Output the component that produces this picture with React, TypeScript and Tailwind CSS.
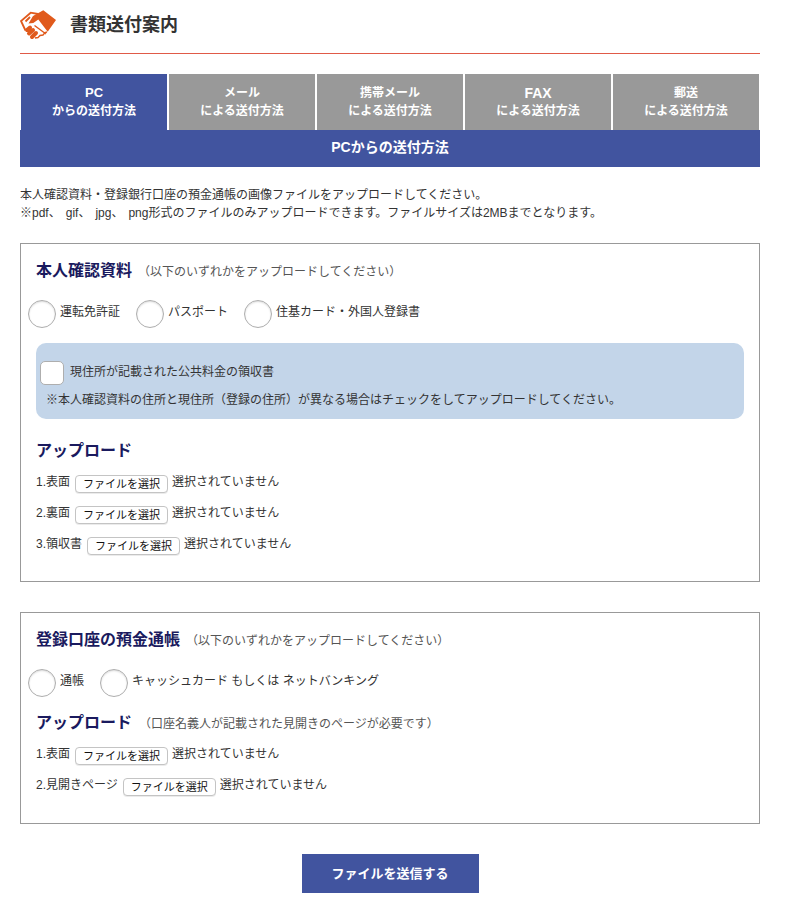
import React from "react";

const tabs: [string, string, string][] = [
  ["PC", "からの送付方法", "text-[13px]"],
  ["メール", "による送付方法", ""],
  ["携帯メール", "による送付方法", ""],
  ["FAX", "による送付方法", "text-[14px]"],
  ["郵送", "による送付方法", ""],
];

function Radio({ label }: { label: string }) {
  return (
    <div className="flex items-start">
      <span className="h-7 w-7 rounded-full border border-[#aeaeae] bg-white shadow-[inset_0_1px_2px_rgba(0,0,0,0.15)]" />
      <span className="ml-1 mt-[3px] text-[12px] leading-[18px] text-[#333]">{label}</span>
    </div>
  );
}

function FileRow({ label }: { label: string }) {
  return (
    <div className="flex h-[31px] items-start text-[12px] leading-[18px] text-[#333]">
      <span>{label}</span>
      <span className="ml-[5px] mt-[2px] flex h-[18px] w-[93px] items-center justify-center rounded-[4px] border border-[#c4c4c4] bg-white text-[11px] leading-none text-[#111] shadow-[0_1px_0_rgba(0,0,0,0.08)]">
        ファイルを選択
      </span>
      <span className="ml-1">選択されていません</span>
    </div>
  );
}

function Comma() {
  return <span className="tracking-[5px]">、</span>;
}

export default function App() {
  return (
    <div
      className="min-h-[905px] w-[791px] bg-white px-5"
      style={{ fontFamily: '"Liberation Sans", "Noto Sans CJK JP", sans-serif' }}
    >
      <div className="w-[740px]">
        <header className="flex h-[54px] items-start border-b border-[#e05a48] pt-[8px]">
          <svg viewBox="0 0 36 30" className="mt-[2px] h-[30px] w-[36px]">
            <path d="M13 6 L23.3 0.3 L36 10 L27.7 21.7 L18.3 9.5 L13.3 13 L8.5 13.5 Z" fill="#e05a1c" />
            <path d="M5.5 20.5 L1 11 L10.7 2.7 L18 4 M5.5 11.5 L10 7" fill="none" stroke="#e05a1c" strokeWidth="1.8" />
            <path d="M15 28 L18 27.5 L20 25.5 L23 25 L25 22.5 L27 22 M14.5 15.5 L26 24" fill="none" stroke="#e05a1c" strokeWidth="1.4" />
            <path d="M7 20 L10 17.5 M9 23.5 L13 20 M12 27 L16 23" fill="none" stroke="#e05a1c" strokeWidth="4" strokeLinecap="round" />
          </svg>
          <h1 className="ml-[14px] mt-[6px] text-[18px] font-bold leading-[22px] text-[#333]">書類送付案内</h1>
        </header>

        <nav className="mt-5 flex gap-[2px] px-px">
          {tabs.map((t, i) => (
            <div
              key={t[1] + i}
              className={`flex h-14 w-[146px] shrink-0 flex-col items-center justify-center text-center text-[12px] font-bold leading-[18px] text-white ${i === 0 ? "bg-[#41549f]" : "bg-[#999999]"}`}
            >
              <span className={t[2]}>{t[0]}</span>
              <span>{t[1]}</span>
            </div>
          ))}
        </nav>
        <div className="flex h-[37px] items-center justify-center bg-[#41549f] pb-[2px] text-[14px] font-bold text-white">
          PCからの送付方法
        </div>

        <p className="mt-[19px] text-[12px] leading-[18px] text-[#333]">
          本人確認資料・登録銀行口座の預金通帳の画像ファイルをアップロードしてください。
          <br />
          ※pdf<Comma />gif<Comma />jpg<Comma />png形式のファイルのみアップロードできます。ファイルサイズは2MBまでとなります。
        </p>

        <section className="mt-[21px] h-[339px] border border-[#999] px-[15px] pt-[17px]">
          <div className="flex items-baseline">
            <h2 className="text-[16px] font-bold leading-[20px] text-[#1a1a5e]">本人確認資料</h2>
            <span className="ml-[6px] text-[12px] text-[#555]">（以下のいずれかをアップロードしてください）</span>
          </div>
          <div className="-ml-[8px] mt-[19px] flex gap-4">
            <Radio label="運転免許証" />
            <Radio label="パスポート" />
            <Radio label="住基カード・外国人登録書" />
          </div>
          <div className="mt-[15px] h-[76px] rounded-[10px] bg-[#c3d5e9] pl-1 pt-[18px]">
            <div className="flex items-start">
              <span className="h-6 w-6 rounded-[5px] border border-[#aeaeae] bg-white" />
              <span className="ml-[6px] mt-[2px] text-[12px] leading-[18px] text-[#333]">現住所が記載された公共料金の領収書</span>
            </div>
            <p className="ml-[6px] mt-[6px] text-[12px] leading-[18px] text-[#333]">
              ※本人確認資料の住所と現住所（登録の住所）が異なる場合はチェックをしてアップロードしてください。
            </p>
          </div>
          <h3 className="mt-[21px] text-[16px] font-bold leading-[22px] text-[#1a1a5e]">アップロード</h3>
          <div className="mt-[11px]">
            <FileRow label="1.表面" />
            <FileRow label="2.裏面" />
            <FileRow label="3.領収書" />
          </div>
        </section>

        <section className="mt-[30px] h-[212px] border border-[#999] px-[15px] pt-[17px]">
          <div className="flex items-baseline">
            <h2 className="text-[16px] font-bold leading-[20px] text-[#1a1a5e]">登録口座の預金通帳</h2>
            <span className="ml-[6px] text-[12px] text-[#555]">（以下のいずれかをアップロードしてください）</span>
          </div>
          <div className="-ml-[8px] mt-[19px] flex gap-4">
            <Radio label="通帳" />
            <Radio label="キャッシュカード もしくは ネットバンキング" />
          </div>
          <div className="mt-[15px] flex items-baseline">
            <h3 className="text-[16px] font-bold leading-[22px] text-[#1a1a5e]">アップロード</h3>
            <span className="ml-[7px] text-[12px] text-[#555]">（口座名義人が記載された見開きのページが必要です）</span>
          </div>
          <div className="mt-[11px]">
            <FileRow label="1.表面" />
            <FileRow label="2.見開きページ" />
          </div>
        </section>

        <div className="mt-[30px] flex justify-center">
          <button className="h-[39px] w-[177px] bg-[#41549f] text-[13px] font-bold text-white">ファイルを送信する</button>
        </div>
      </div>
    </div>
  );
}
